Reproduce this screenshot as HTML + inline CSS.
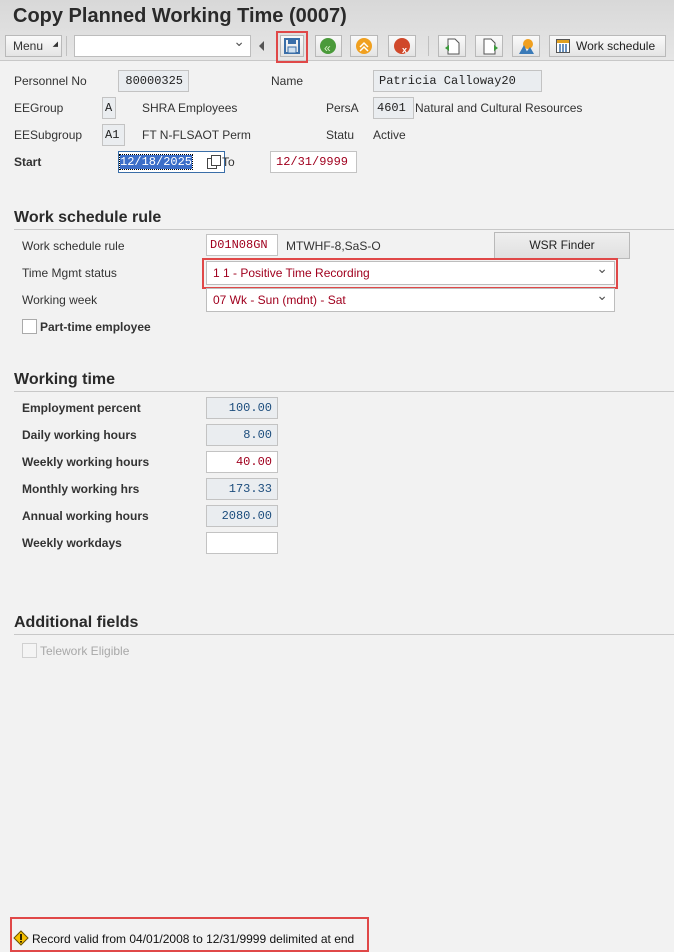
<!DOCTYPE html>
<html><head><meta charset="utf-8"><style>
*{box-sizing:border-box;margin:0;padding:0}
body{width:674px;height:952px;background:#f2f2f2;font-family:"Liberation Sans",Arial,sans-serif;font-size:12px;color:#333;position:relative;overflow:hidden}
.a{position:absolute}
.hdr{left:0;top:0;width:674px;height:61px;background:linear-gradient(#d8d8d8,#e6e6e6);border-bottom:1px solid #c8c8c8}
.title{left:13px;top:5px;font-size:20px;font-weight:bold;color:#2a2a2a}
.btn{background:linear-gradient(#fafafa,#e4e4e4);border:1px solid #b9b9b9;height:22px;top:35px}
.lbl{color:#333;font-size:12px}
.box{border:1px solid #c3c3c3;background:#eaedf0;height:22px;font-family:"Liberation Mono",monospace;font-size:12px;line-height:20px;padding:0 5px;color:#222}
.w{background:#fff}
.red{color:#a0001e}
.num{text-align:right;color:#1c4d7d}
.b{font-weight:bold}
.sec{font-size:16px;font-weight:bold;color:#2a2a2a;left:14px}
.line{left:14px;width:660px;height:1px;background:#c8c8c8}
.dd{border:1px solid #bdbdbd;background:#fff;height:24px;line-height:22px;padding-left:6px;color:#a0001e}
.dd:after{content:"⌄";position:absolute;right:6px;top:-5px;color:#555;font-size:14px}
.rb{border:2px solid #e04848;}
</style></head><body>
<div class="a hdr"></div>
<div class="a title">Copy Planned Working Time (0007)</div>
<div class="a btn" style="left:5px;width:57px;line-height:20px;padding-left:7px">Menu<span style="position:absolute;right:3px;bottom:1px;font-size:7px">◢</span></div>
<div class="a" style="left:66px;top:36px;width:1px;height:20px;background:#c0c0c0"></div>
<div class="a" style="left:74px;top:35px;width:177px;height:22px;background:#fff;border:1px solid #bdbdbd"><span style="position:absolute;right:5px;top:-3px;color:#555;font-size:14px">⌄</span></div>
<div class="a" style="left:259px;top:41px;width:0;height:0;border-top:5px solid transparent;border-bottom:5px solid transparent;border-right:5px solid #555"></div>
<div class="a btn" style="left:280px;width:24px"><svg width="22" height="20" viewBox="0 0 22 20"><rect x="4" y="3" width="14" height="14" fill="none" stroke="#3a6ea8" stroke-width="2"/><rect x="7" y="3" width="8" height="5" fill="#3a6ea8"/><rect x="7" y="11" width="8" height="6" fill="#cfe0f0" stroke="#3a6ea8"/></svg></div>
<div class="a rb" style="left:276px;top:31px;width:32px;height:32px"></div>
<div class="a btn" style="left:315px;width:27px"><svg width="25" height="20"><circle cx="12" cy="10" r="8" fill="#4a9a3a"/><text x="8" y="16" font-size="12" fill="#d8f0c8" font-family="Liberation Sans">«</text></svg></div>
<div class="a btn" style="left:350px;width:28px"><svg width="26" height="20"><circle cx="13" cy="10" r="8" fill="#f0a020"/><path d="M9 11l4-4 4 4M9 15l4-4 4 4" stroke="#fff" fill="none" stroke-width="1.5"/></svg></div>
<div class="a btn" style="left:388px;width:28px"><svg width="26" height="20"><circle cx="13" cy="10" r="8" fill="#d0482a"/><text x="13" y="17" font-size="9" fill="#fff" font-weight="bold" font-family="Liberation Sans">x</text></svg></div>
<div class="a" style="left:428px;top:36px;width:1px;height:20px;background:#c0c0c0"></div>
<div class="a btn" style="left:438px;width:28px"><svg width="26" height="20"><path d="M9 3h7l4 4v11H9z" fill="#fff" stroke="#555"/><path d="M6 12l4-3v6z" fill="#3a9a3a"/></svg></div>
<div class="a btn" style="left:475px;width:28px"><svg width="26" height="20"><path d="M8 3h7l4 4v11H8z" fill="#fff" stroke="#555"/><path d="M22 12l-4-3v6z" fill="#3a9a3a"/></svg></div>
<div class="a btn" style="left:512px;width:28px"><svg width="26" height="20"><circle cx="15" cy="8" r="5" fill="#f0a020"/><path d="M6 18l5-9 4 9zM12 18l5-7 4 7z" fill="#3a7ab8"/></svg></div>
<div class="a btn" style="left:549px;width:117px;line-height:20px;padding-left:26px;color:#222">Work schedule<svg class="a" style="left:6px;top:3px" width="14" height="14"><rect x="0.5" y="0.5" width="13" height="13" fill="#fff" stroke="#555"/><rect x="1" y="1" width="12" height="3" fill="#e0a020"/><path d="M4 5v8M7 5v8M10 5v8" stroke="#3a6ea8" stroke-width="1.5"/></svg></div>

<div class="a lbl" style="left:14px;top:74px">Personnel No</div>
<div class="a box" style="left:118px;top:70px;width:71px;text-align:right">80000325</div>
<div class="a lbl" style="left:271px;top:74px">Name</div>
<div class="a box" style="left:373px;top:70px;width:169px">Patricia Calloway20</div>
<div class="a lbl" style="left:14px;top:101px">EEGroup</div>
<div class="a box" style="left:102px;top:97px;width:14px;padding:0 2px">A</div>
<div class="a lbl" style="left:142px;top:101px">SHRA Employees</div>
<div class="a lbl" style="left:326px;top:101px">PersA</div>
<div class="a box" style="left:373px;top:97px;width:41px;padding:0 3px">4601</div>
<div class="a lbl" style="left:415px;top:101px">Natural and Cultural Resources</div>
<div class="a lbl" style="left:14px;top:128px">EESubgroup</div>
<div class="a box" style="left:102px;top:124px;width:23px;padding:0 2px">A1</div>
<div class="a lbl" style="left:142px;top:128px">FT N-FLSAOT Perm</div>
<div class="a lbl" style="left:326px;top:128px">Statu</div>
<div class="a lbl" style="left:373px;top:128px">Active</div>
<div class="a lbl b" style="left:14px;top:155px">Start</div>
<div class="a box w" style="left:118px;top:151px;width:107px;border-color:#3a6ea8;padding:0 1px"><span style="background:#3c6ec8;color:#fff;outline:1px dotted #000">12/18/2025</span></div>
<svg class="a" style="left:207px;top:155px" width="14" height="14"><rect x="0.5" y="3.5" width="9" height="10" fill="#fff" stroke="#444"/><rect x="4.5" y="0.5" width="9" height="10" fill="#fff" stroke="#444"/></svg>
<div class="a lbl" style="left:222px;top:155px">To</div>
<div class="a box w red" style="left:270px;top:151px;width:87px">12/31/9999</div>

<div class="a sec" style="top:209px">Work schedule rule</div>
<div class="a line" style="top:229px"></div>
<div class="a lbl" style="left:22px;top:239px">Work schedule rule</div>
<div class="a box w red" style="left:206px;top:234px;width:72px;padding:0 3px">D01N08GN</div>
<div class="a lbl" style="left:286px;top:239px">MTWHF-8,SaS-O</div>
<div class="a" style="left:494px;top:232px;width:136px;height:27px;background:linear-gradient(#efefef,#e0e0e0);border:1px solid #b9b9b9;text-align:center;line-height:24px;color:#222">WSR Finder</div>
<div class="a lbl" style="left:22px;top:266px">Time Mgmt status</div>
<div class="a dd" style="left:206px;top:261px;width:409px">1 1 - Positive Time Recording</div>
<div class="a rb" style="left:202px;top:258px;width:416px;height:31px"></div>
<div class="a lbl" style="left:22px;top:293px">Working week</div>
<div class="a dd" style="left:206px;top:288px;width:409px">07 Wk - Sun (mdnt) - Sat</div>
<div class="a" style="left:22px;top:319px;width:15px;height:15px;background:#fff;border:1px solid #aaa"></div>
<div class="a lbl b" style="left:40px;top:320px">Part-time employee</div>

<div class="a sec" style="top:371px">Working time</div>
<div class="a line" style="top:391px"></div>
<div class="a lbl b" style="left:22px;top:401px">Employment percent</div>
<div class="a box num" style="left:206px;top:397px;width:72px">100.00</div>
<div class="a lbl b" style="left:22px;top:428px">Daily working hours</div>
<div class="a box num" style="left:206px;top:424px;width:72px">8.00</div>
<div class="a lbl b" style="left:22px;top:455px">Weekly working hours</div>
<div class="a box w num red" style="left:206px;top:451px;width:72px;color:#a0001e">40.00</div>
<div class="a lbl b" style="left:22px;top:482px">Monthly working hrs</div>
<div class="a box num" style="left:206px;top:478px;width:72px">173.33</div>
<div class="a lbl b" style="left:22px;top:509px">Annual working hours</div>
<div class="a box num" style="left:206px;top:505px;width:72px">2080.00</div>
<div class="a lbl b" style="left:22px;top:536px">Weekly workdays</div>
<div class="a box w" style="left:206px;top:532px;width:72px"></div>

<div class="a sec" style="top:614px">Additional fields</div>
<div class="a line" style="top:634px"></div>
<div class="a" style="left:22px;top:643px;width:15px;height:15px;background:#f4f4f4;border:1px solid #d0d0d0"></div>
<div class="a lbl" style="left:40px;top:644px;color:#a8a8a8">Telework Eligible</div>

<div class="a rb" style="left:10px;top:917px;width:359px;height:35px"></div>
<svg class="a" style="left:13px;top:930px" width="16" height="16"><path d="M8 1L15 8 8 15 1 8z" fill="#f5c000" stroke="#6a5000"/><rect x="7.2" y="4" width="1.6" height="6" fill="#000"/><rect x="7.2" y="11" width="1.6" height="1.6" fill="#000"/></svg>
<div class="a" style="left:32px;top:932px;color:#111">Record valid from 04/01/2008 to 12/31/9999 delimited at end</div>
</body></html>
